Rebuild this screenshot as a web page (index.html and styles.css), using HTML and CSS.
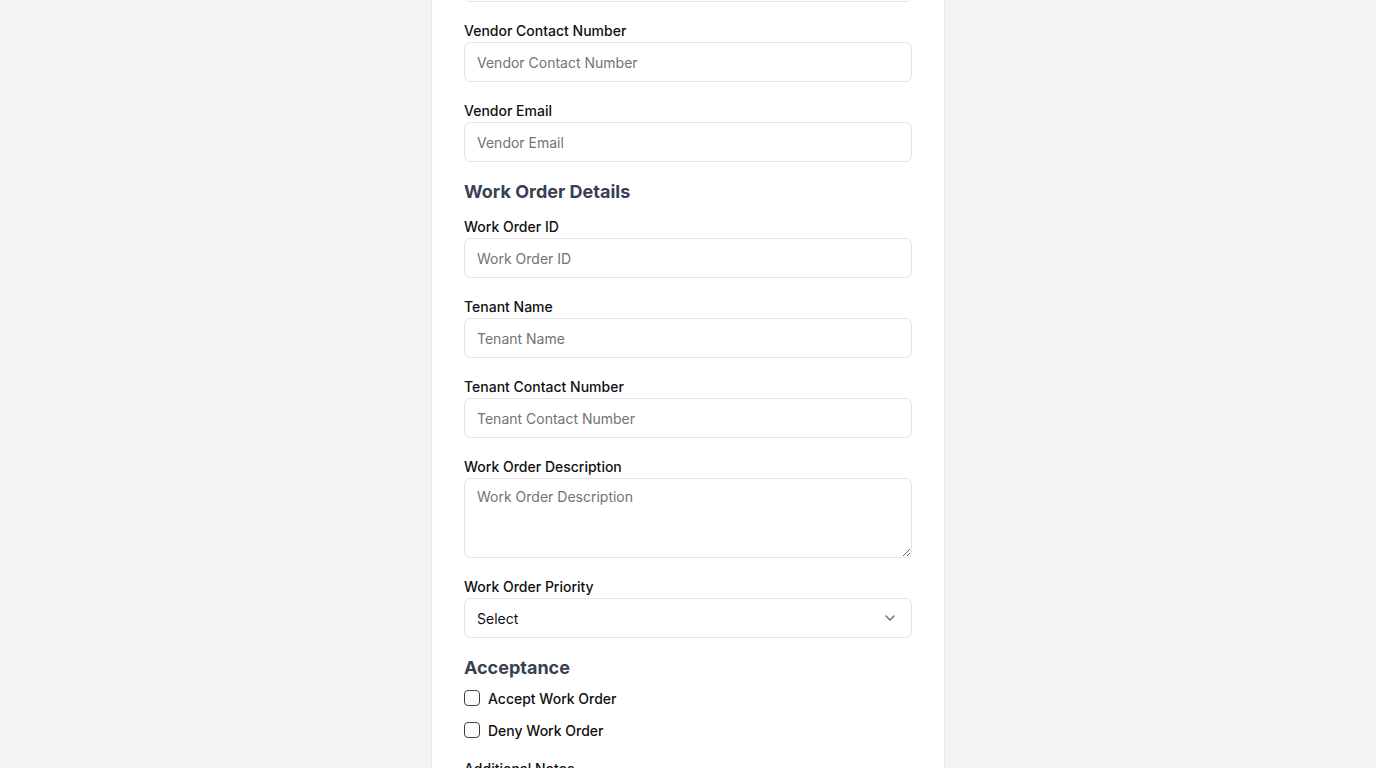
FILE: index.html
```html
<!DOCTYPE html>
<html lang="en">
<head>
<meta charset="utf-8">
<title>Work Order Form</title>
<link rel="stylesheet" href="styles.css">
</head>
<body>
<main class="card">
  <form class="form">
    <div class="field">
      <label class="label" for="vendor-name">Vendor Name</label>
      <input class="input" id="vendor-name" type="text" placeholder="Vendor Name">
    </div>
    <div class="field">
      <label class="label" for="vendor-phone">Vendor Contact Number</label>
      <input class="input" id="vendor-phone" type="text" placeholder="Vendor Contact Number">
    </div>
    <div class="field">
      <label class="label" for="vendor-email">Vendor Email</label>
      <input class="input" id="vendor-email" type="text" placeholder="Vendor Email">
    </div>

    <h2 class="section-title">Work Order Details</h2>
    <div class="field">
      <label class="label" for="wo-id">Work Order ID</label>
      <input class="input" id="wo-id" type="text" placeholder="Work Order ID">
    </div>
    <div class="field">
      <label class="label" for="tenant-name">Tenant Name</label>
      <input class="input" id="tenant-name" type="text" placeholder="Tenant Name">
    </div>
    <div class="field">
      <label class="label" for="tenant-phone">Tenant Contact Number</label>
      <input class="input" id="tenant-phone" type="text" placeholder="Tenant Contact Number">
    </div>
    <div class="field">
      <label class="label" for="wo-desc">Work Order Description</label>
      <textarea class="input textarea" id="wo-desc" placeholder="Work Order Description"></textarea>
    </div>
    <div class="field">
      <label class="label" for="wo-priority">Work Order Priority</label>
      <div class="select-wrap">
        <select class="input select" id="wo-priority">
          <option>Select</option>
          <option>Low</option>
          <option>Medium</option>
          <option>High</option>
        </select>
        <svg class="chevron" width="16" height="16" viewBox="0 0 16 16" aria-hidden="true">
          <path d="M4 6l4 4 4-4" fill="none" stroke="#6b7280" stroke-width="1.5" stroke-linecap="round" stroke-linejoin="round"/>
        </svg>
      </div>
    </div>

    <h2 class="section-title">Acceptance</h2>
    <div class="checks">
      <label class="check"><input class="checkbox" type="checkbox"><span>Accept Work Order</span></label>
      <label class="check"><input class="checkbox" type="checkbox"><span>Deny Work Order</span></label>
    </div>
    <div class="field">
      <label class="label" for="notes">Additional Notes</label>
      <textarea class="input textarea" id="notes" placeholder="Additional Notes"></textarea>
    </div>
  </form>
</main>
</body>
</html>
```

FILE: styles.css
```css
* { box-sizing: border-box; }

html, body {
  margin: 0;
  padding: 0;
  height: 100%;
  overflow: hidden;
}

body {
  background: #f3f4f6;
  font-family: Inter, "Liberation Sans", sans-serif;
  color: #111827;
}

.card {
  width: 514px;
  margin: -90px auto 0;
  background: #ffffff;
  border-left: 1px solid #e5e7eb;
  border-right: 1px solid #e5e7eb;
  padding: 32px;
  min-height: 1200px;
}

.form {
  display: flex;
  flex-direction: column;
}

.field {
  display: flex;
  flex-direction: column;
  margin-bottom: 20px;
}

.label {
  font-size: 14px;
  line-height: 18px;
  padding-bottom: 2px;
  font-weight: 500;
  color: #111111;
}

.input {
  width: 100%;
  height: 40px;
  border: 1px solid #e4e4e7;
  border-radius: 6px;
  padding: 0 12px;
  font-family: inherit;
  font-size: 14px;
  color: #111111;
  background: #ffffff;
  outline: none;
}

.input::placeholder {
  color: #737373;
}

.textarea {
  height: 80px;
  padding: 8px 12px;
  line-height: 20px;
  resize: vertical;
}

.select-wrap {
  position: relative;
}

.select {
  appearance: none;
  -webkit-appearance: none;
}

.chevron {
  position: absolute;
  right: 14px;
  top: 12px;
  pointer-events: none;
}

.section-title {
  margin: -4px 0 12px;
  font-size: 18px;
  line-height: 28px;
  font-weight: 700;
  color: #374151;
}

.checks {
  display: flex;
  flex-direction: column;
  gap: 12px;
  margin: -6px 0 20px;
}

.check {
  display: flex;
  align-items: center;
  gap: 8px;
  height: 20px;
  font-size: 14px;
  font-weight: 500;
  color: #111111;
}

.checkbox {
  appearance: none;
  -webkit-appearance: none;
  width: 16px;
  height: 16px;
  margin: 0;
  border: 1.5px solid #3f3f46;
  border-radius: 4px;
  background: #ffffff;
}
```
